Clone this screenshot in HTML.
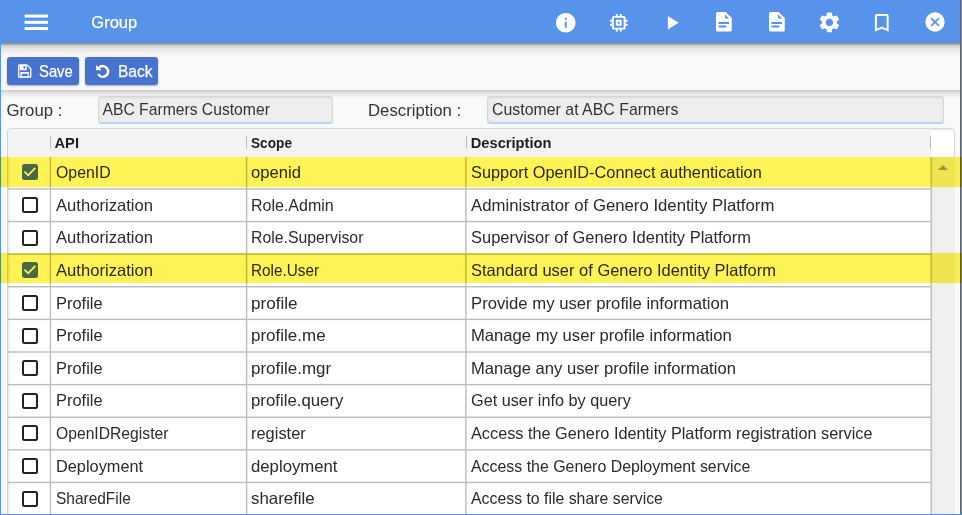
<!DOCTYPE html>
<html><head><meta charset="utf-8"><style>
*{margin:0;padding:0;box-sizing:border-box}
html,body{width:962px;height:515px;overflow:hidden;background:#f9f9f9;font-family:"Liberation Sans",sans-serif}
.a{position:absolute}
.t{position:absolute;white-space:nowrap;line-height:1}
</style></head><body>

<div class="a" style="left:0;top:0;width:962px;height:515px;background:#f9f9f9"></div>
<div class="a" style="left:0;top:0;width:962px;height:43px;background:#5893eb;z-index:5"></div>
<div class="a" style="left:1px;top:43px;width:959px;height:13px;background:linear-gradient(#8e8e88 0px,#a8a8a4 1.5px,#d2d2d2 2.5px,#e6e6e6 6px,#f9f9f9 13px);z-index:5"></div>
<svg class="a" style="left:0;top:0;z-index:6" width="60" height="43" viewBox="0 0 60 43"><rect x="24.6" y="14.55" width="23.3" height="3" fill="#fff"/><rect x="24.6" y="20.8" width="23.3" height="3" fill="#fff"/><rect x="24.6" y="27.0" width="23.3" height="3" fill="#fff"/></svg>
<div class="t" style="left:91.3px;top:13.7px;font-size:16.5px;color:#fff;-webkit-text-stroke:0.25px #fff;z-index:6">Group</div>
<svg class="a" style="left:554.25px;top:10.55px;z-index:6" width="23.50" height="23.50" viewBox="0 0 24 24" fill="#fff"><path d="M12 2C6.48 2 2 6.48 2 12s4.48 10 10 10 10-4.48 10-10S17.52 2 12 2zm1 15h-2v-6h2v6zm0-8h-2V7h2v2z"/></svg>
<svg class="a" style="left:607.25px;top:10.55px;z-index:6" width="23.50" height="23.50" viewBox="0 0 24 24" fill="#fff"><path d="M15 9H9v6h6V9zm-2 4h-2v-2h2v2zm8-2V9h-2V7c0-1.1-.9-2-2-2h-2V3h-2v2h-2V3H9v2H7c-1.1 0-2 .9-2 2v2H3v2h2v2H3v2h2v2c0 1.1.9 2 2 2h2v2h2v-2h2v2h2v-2h2c1.1 0 2-.9 2-2v-2h2v-2h-2v-2h2zm-4 6H7V7h10v10z"/></svg>
<svg class="a" style="left:660.25px;top:10.55px;z-index:6" width="23.50" height="23.50" viewBox="0 0 24 24" fill="#fff"><path d="M8 5v14l11-7z"/></svg>
<svg class="a" style="left:817.15px;top:9.85px;z-index:6" width="24.79" height="24.79" viewBox="0 0 24 24" fill="#fff"><path d="M19.14 12.94c.04-.3.06-.61.06-.94 0-.32-.02-.64-.07-.94l2.03-1.58c.18-.14.23-.41.12-.61l-1.92-3.32c-.12-.22-.37-.29-.59-.22l-2.39.96c-.5-.38-1.030-.7-1.62-.94l-.36-2.54c-.04-.24-.24-.41-.48-.41h-3.84c-.24 0-.43.17-.47.41l-.36 2.54c-.59.24-1.13.57-1.62.94l-2.39-.96c-.22-.08-.47 0-.59.22L2.74 8.87c-.12.21-.08.47.12.61l2.030 1.58c-.05.3-.09.63-.09.94s.02.64.07.94l-2.030 1.58c-.18.14-.23.41-.12.61l1.92 3.32c.12.22.37.29.59.22l2.39-.96c.5.38 1.030.7 1.62.94l.36 2.54c.05.24.24.41.48.41h3.84c.24 0 .44-.17.47-.41l.36-2.54c.59-.24 1.13-.56 1.62-.94l2.39.96c.22.08.47 0 .59-.22l1.92-3.32c.12-.22.07-.47-.12-.61l-2.01-1.58zM12 15.6c-1.98 0-3.6-1.62-3.6-3.6s1.62-3.6 3.6-3.6 3.6 1.62 3.6 3.6-1.62 3.6-3.6 3.6z"/></svg>
<svg class="a" style="left:870.25px;top:10.55px;z-index:6" width="23.50" height="23.50" viewBox="0 0 24 24" fill="#fff"><path d="M17 3H7c-1.1 0-1.99.9-1.99 2L5 21l7-3 7 3V5c0-1.1-.9-2-2-2zm0 15l-5-2.18L7 18V5h10v13z"/></svg>
<svg class="a" style="left:716.25px;top:12.3px;z-index:6" width="16" height="20" viewBox="0 0 16 20"><path fill="#fff" fill-rule="evenodd" d="M1.5 0H9.6L15.75 6.1V18.1Q15.75 19.6 14.25 19.6H1.5Q0 19.6 0 18.1V1.5Q0 0 1.5 0ZM9 2.4V6.6H13.1ZM2.45 10H13.05V11.9H2.45ZM2.45 13.5H10.35V15.4H2.45Z"/></svg>
<svg class="a" style="left:768.95px;top:12.3px;z-index:6" width="16" height="20" viewBox="0 0 16 20"><path fill="#fff" fill-rule="evenodd" d="M1.5 0H9.6L15.75 6.1V18.1Q15.75 19.6 14.25 19.6H1.5Q0 19.6 0 18.1V1.5Q0 0 1.5 0ZM9 2.4V6.6H13.1ZM2.45 10H13.05V11.9H2.45ZM2.45 13.5H10.35V15.4H2.45Z"/></svg>
<svg class="a" style="left:924.6px;top:12.1px;z-index:6" width="20" height="20" viewBox="0 0 20 20"><circle cx="10" cy="10" r="9.7" fill="#fff"/><path d="M6.1 6.1L13.9 13.9M13.9 6.1L6.1 13.9" stroke="#5893eb" stroke-width="1.7"/></svg>
<div class="a" style="left:1px;top:43px;width:959px;height:47px;background:#f9f9f9;z-index:2"></div>
<div class="a" style="left:1px;top:89.7px;width:959px;height:8px;background:linear-gradient(#c9c9c9 0px,#dedede 2px,#f9f9f9 8px);z-index:2"></div>
<div class="a" style="left:7px;top:57.2px;width:72px;height:28.2px;background:#4673d0;border-radius:3px;box-shadow:0 1px 2px rgba(0,0,0,.3);z-index:3"></div>
<div class="a" style="left:85px;top:57.2px;width:72.8px;height:28.2px;background:#4673d0;border-radius:3px;box-shadow:0 1px 2px rgba(0,0,0,.3);z-index:3"></div>
<svg class="a" style="left:18px;top:64px;z-index:4" width="14" height="14" viewBox="0 0 14 14"><path d="M0.75 1.05H9L12.75 4.8V13.05H0.75Z" fill="none" stroke="#fff" stroke-width="1.3" stroke-linejoin="round"/><path fill="#fff" fill-rule="evenodd" d="M1.8 0.4H8.8V6.2H1.8ZM5.5 2.2H7.4V4.6H5.5Z"/><path fill="#fff" fill-rule="evenodd" d="M2.4 8.1H10.8V13.5H2.4ZM3.8 9.8H9.6V12.5H3.8Z"/></svg>
<div class="t" style="left:39.1px;top:62.95px;font-size:16.3px;color:#fff;-webkit-text-stroke:0.25px #fff;z-index:4;transform:scaleX(0.91);transform-origin:0 0">Save</div>
<svg class="a" style="left:94px;top:62px;z-index:4" width="18" height="18" viewBox="0 0 18 18"><path d="M5.6 5.2A5.3 5.3 0 1 1 4.8 13" fill="none" stroke="#fff" stroke-width="2.6" stroke-linecap="round"/><path d="M2.1 3.1L2.1 8.2L7.6 8.2Z" fill="#fff"/></svg>
<div class="t" style="left:118px;top:62.95px;font-size:16.3px;color:#fff;-webkit-text-stroke:0.25px #fff;z-index:4;transform:scaleX(0.952);transform-origin:0 0">Back</div>
<div class="t" style="left:6.5px;top:102.8px;font-size:16.75px;color:#333">Group :</div>
<div class="a" style="left:98.3px;top:96px;width:234.3px;height:27.7px;background:#ededed;border:1px solid #d6d6d6;border-bottom:2px solid #b7d5fa;border-radius:3px;box-shadow:inset 0 1px 2px rgba(0,0,0,.08);z-index:3"></div>
<div class="t" style="left:102.5px;top:101.6px;font-size:15.7px;color:#333;z-index:4">ABC Farmers Customer</div>
<div class="t" style="left:368px;top:102.8px;font-size:16.75px;color:#333">Description :</div>
<div class="a" style="left:487.3px;top:96px;width:456.3px;height:27.7px;background:#ededed;border:1px solid #d6d6d6;border-bottom:2px solid #b7d5fa;border-radius:3px;box-shadow:inset 0 1px 2px rgba(0,0,0,.08);z-index:3"></div>
<div class="t" style="left:491.5px;top:101.6px;font-size:15.7px;color:#333;z-index:4;transform:scaleX(1.013);transform-origin:0 0">Customer at ABC Farmers</div>
<div class="a" style="left:7px;top:128px;width:948px;height:400px;background:#fff;border:1px solid #d6d6d6;border-radius:4px;box-shadow:inset 1px 1px 2px rgba(0,0,0,.12)"></div>
<div class="a" style="left:8px;top:129px;width:923px;height:28px;background:#f3f3f3;border-radius:3px 0 0 0"></div>
<div class="a" style="left:50px;top:136px;width:1.3px;height:13px;background:#bdbdbd"></div>
<div class="a" style="left:246px;top:136px;width:1.3px;height:13px;background:#bdbdbd"></div>
<div class="a" style="left:466px;top:136px;width:1.3px;height:13px;background:#bdbdbd"></div>
<div class="a" style="left:930px;top:136px;width:1.3px;height:13px;background:#bdbdbd"></div>
<div class="t" style="left:54.5px;top:135.7px;font-size:14.7px;font-weight:bold;color:#1e1e1e">API</div>
<div class="t" style="left:250.8px;top:135.7px;font-size:14.7px;font-weight:bold;color:#1e1e1e;transform:scaleX(0.93);transform-origin:0 0">Scope</div>
<div class="t" style="left:470.7px;top:135.7px;font-size:14.7px;font-weight:bold;color:#1e1e1e">Description</div>
<div class="a" style="left:932px;top:157px;width:22.7px;height:360px;background:#efefef"></div>
<div class="a" style="left:938.4px;top:165.3px;width:0;height:0;border-left:5px solid transparent;border-right:5px solid transparent;border-bottom:5.5px solid #a0a0a0"></div>
<svg class="a" style="left:0;top:0" width="962" height="515" viewBox="0 0 962 515"><rect x="8" y="188.20" width="923.5" height="1.4" fill="#bcbcbc"/><rect x="8" y="220.82" width="923.5" height="1.4" fill="#bcbcbc"/><rect x="8" y="253.44" width="923.5" height="1.4" fill="#bcbcbc"/><rect x="8" y="286.06" width="923.5" height="1.4" fill="#bcbcbc"/><rect x="8" y="318.68" width="923.5" height="1.4" fill="#bcbcbc"/><rect x="8" y="351.30" width="923.5" height="1.4" fill="#bcbcbc"/><rect x="8" y="383.92" width="923.5" height="1.4" fill="#bcbcbc"/><rect x="8" y="416.54" width="923.5" height="1.4" fill="#bcbcbc"/><rect x="8" y="449.16" width="923.5" height="1.4" fill="#bcbcbc"/><rect x="8" y="481.78" width="923.5" height="1.4" fill="#bcbcbc"/><rect x="8" y="514.40" width="923.5" height="1.4" fill="#bcbcbc"/><rect x="49.70" y="157" width="1.4" height="360" fill="#bcbcbc"/><rect x="245.90" y="157" width="1.4" height="360" fill="#bcbcbc"/><rect x="465.20" y="157" width="1.4" height="360" fill="#bcbcbc"/><rect x="930.50" y="157" width="1.4" height="360" fill="#bcbcbc"/></svg>
<div class="a" style="left:22px;top:164.40px;width:16px;height:16px;background:#4a6ed0;border-radius:2.5px"></div>
<svg class="a" style="left:22px;top:164.40px" width="16" height="16" viewBox="0 0 16 16"><path d="M2.4 7.7L6.2 11.3L13.3 3.9" fill="none" stroke="#fff" stroke-width="1.8"/></svg>
<div class="t" style="left:55.8px;top:164.10px;font-size:16.5px;color:#2a2a2a;transform:scaleX(0.9605);transform-origin:0 0">OpenID</div>
<div class="t" style="left:251.3px;top:164.10px;font-size:16.5px;color:#2a2a2a;transform:scaleX(1.0066);transform-origin:0 0">openid</div>
<div class="t" style="left:471.4px;top:164.10px;font-size:16.5px;color:#2a2a2a;transform:scaleX(0.9906);transform-origin:0 0">Support OpenID-Connect authentication</div>
<div class="a" style="left:22px;top:197.02px;width:16px;height:16px;border:2px solid #222;border-radius:2.5px;background:#fff"></div>
<div class="t" style="left:55.8px;top:196.72px;font-size:16.5px;color:#2a2a2a;transform:scaleX(1.0069);transform-origin:0 0">Authorization</div>
<div class="t" style="left:251.3px;top:196.72px;font-size:16.5px;color:#2a2a2a;transform:scaleX(0.9693);transform-origin:0 0">Role.Admin</div>
<div class="t" style="left:471.4px;top:196.72px;font-size:16.5px;color:#2a2a2a;transform:scaleX(1.0147);transform-origin:0 0">Administrator of Genero Identity Platform</div>
<div class="a" style="left:22px;top:229.64px;width:16px;height:16px;border:2px solid #222;border-radius:2.5px;background:#fff"></div>
<div class="t" style="left:55.8px;top:229.34px;font-size:16.5px;color:#2a2a2a;transform:scaleX(1.0069);transform-origin:0 0">Authorization</div>
<div class="t" style="left:251.3px;top:229.34px;font-size:16.5px;color:#2a2a2a;transform:scaleX(0.9577);transform-origin:0 0">Role.Supervisor</div>
<div class="t" style="left:471.4px;top:229.34px;font-size:16.5px;color:#2a2a2a;transform:scaleX(0.9976);transform-origin:0 0">Supervisor of Genero Identity Platform</div>
<div class="a" style="left:22px;top:262.26px;width:16px;height:16px;background:#4a6ed0;border-radius:2.5px"></div>
<svg class="a" style="left:22px;top:262.26px" width="16" height="16" viewBox="0 0 16 16"><path d="M2.4 7.7L6.2 11.3L13.3 3.9" fill="none" stroke="#fff" stroke-width="1.8"/></svg>
<div class="t" style="left:55.8px;top:261.96px;font-size:16.5px;color:#2a2a2a;transform:scaleX(1.0069);transform-origin:0 0">Authorization</div>
<div class="t" style="left:251.3px;top:261.96px;font-size:16.5px;color:#2a2a2a;transform:scaleX(0.9274);transform-origin:0 0">Role.User</div>
<div class="t" style="left:471.4px;top:261.96px;font-size:16.5px;color:#2a2a2a;transform:scaleX(0.9985);transform-origin:0 0">Standard user of Genero Identity Platform</div>
<div class="a" style="left:22px;top:294.88px;width:16px;height:16px;border:2px solid #222;border-radius:2.5px;background:#fff"></div>
<div class="t" style="left:55.8px;top:294.58px;font-size:16.5px;color:#2a2a2a;transform:scaleX(0.9959);transform-origin:0 0">Profile</div>
<div class="t" style="left:251.3px;top:294.58px;font-size:16.5px;color:#2a2a2a;transform:scaleX(1.0366);transform-origin:0 0">profile</div>
<div class="t" style="left:471.4px;top:294.58px;font-size:16.5px;color:#2a2a2a;transform:scaleX(1.0119);transform-origin:0 0">Provide my user profile information</div>
<div class="a" style="left:22px;top:327.50px;width:16px;height:16px;border:2px solid #222;border-radius:2.5px;background:#fff"></div>
<div class="t" style="left:55.8px;top:327.20px;font-size:16.5px;color:#2a2a2a;transform:scaleX(0.9959);transform-origin:0 0">Profile</div>
<div class="t" style="left:251.3px;top:327.20px;font-size:16.5px;color:#2a2a2a;transform:scaleX(1.0295);transform-origin:0 0">profile.me</div>
<div class="t" style="left:471.4px;top:327.20px;font-size:16.5px;color:#2a2a2a;transform:scaleX(1.0084);transform-origin:0 0">Manage my user profile information</div>
<div class="a" style="left:22px;top:360.12px;width:16px;height:16px;border:2px solid #222;border-radius:2.5px;background:#fff"></div>
<div class="t" style="left:55.8px;top:359.82px;font-size:16.5px;color:#2a2a2a;transform:scaleX(0.9959);transform-origin:0 0">Profile</div>
<div class="t" style="left:251.3px;top:359.82px;font-size:16.5px;color:#2a2a2a;transform:scaleX(1.0287);transform-origin:0 0">profile.mgr</div>
<div class="t" style="left:471.4px;top:359.82px;font-size:16.5px;color:#2a2a2a;transform:scaleX(1.0063);transform-origin:0 0">Manage any user profile information</div>
<div class="a" style="left:22px;top:392.74px;width:16px;height:16px;border:2px solid #222;border-radius:2.5px;background:#fff"></div>
<div class="t" style="left:55.8px;top:392.44px;font-size:16.5px;color:#2a2a2a;transform:scaleX(0.9959);transform-origin:0 0">Profile</div>
<div class="t" style="left:251.3px;top:392.44px;font-size:16.5px;color:#2a2a2a;transform:scaleX(1.018);transform-origin:0 0">profile.query</div>
<div class="t" style="left:471.4px;top:392.44px;font-size:16.5px;color:#2a2a2a;transform:scaleX(0.9848);transform-origin:0 0">Get user info by query</div>
<div class="a" style="left:22px;top:425.36px;width:16px;height:16px;border:2px solid #222;border-radius:2.5px;background:#fff"></div>
<div class="t" style="left:55.8px;top:425.06px;font-size:16.5px;color:#2a2a2a;transform:scaleX(0.9503);transform-origin:0 0">OpenIDRegister</div>
<div class="t" style="left:251.3px;top:425.06px;font-size:16.5px;color:#2a2a2a;transform:scaleX(0.996);transform-origin:0 0">register</div>
<div class="t" style="left:471.4px;top:425.06px;font-size:16.5px;color:#2a2a2a;transform:scaleX(0.9862);transform-origin:0 0">Access the Genero Identity Platform registration service</div>
<div class="a" style="left:22px;top:457.98px;width:16px;height:16px;border:2px solid #222;border-radius:2.5px;background:#fff"></div>
<div class="t" style="left:55.8px;top:457.68px;font-size:16.5px;color:#2a2a2a;transform:scaleX(0.9892);transform-origin:0 0">Deployment</div>
<div class="t" style="left:251.3px;top:457.68px;font-size:16.5px;color:#2a2a2a;transform:scaleX(1.0138);transform-origin:0 0">deployment</div>
<div class="t" style="left:471.4px;top:457.68px;font-size:16.5px;color:#2a2a2a;transform:scaleX(0.9637);transform-origin:0 0">Access the Genero Deployment service</div>
<div class="a" style="left:22px;top:490.60px;width:16px;height:16px;border:2px solid #222;border-radius:2.5px;background:#fff"></div>
<div class="t" style="left:55.8px;top:490.30px;font-size:16.5px;color:#2a2a2a;transform:scaleX(0.937);transform-origin:0 0">SharedFile</div>
<div class="t" style="left:251.3px;top:490.30px;font-size:16.5px;color:#2a2a2a;transform:scaleX(1.0211);transform-origin:0 0">sharefile</div>
<div class="t" style="left:471.4px;top:490.30px;font-size:16.5px;color:#2a2a2a;transform:scaleX(0.9598);transform-origin:0 0">Access to file share service</div>
<div class="a" style="left:0;top:157px;width:962px;height:30.2px;background:#fff355;mix-blend-mode:multiply;z-index:10"></div>
<div class="a" style="left:0;top:253.3px;width:962px;height:29.7px;background:#fff355;mix-blend-mode:multiply;z-index:10"></div>
<div class="a" style="left:0;top:0;width:1px;height:515px;background:#5b94ea;z-index:9"></div>
<div class="a" style="left:960px;top:0;width:1px;height:515px;background:#666;z-index:9"></div>
<div class="a" style="left:961px;top:0;width:1px;height:515px;background:#5b94ea;z-index:9"></div>
<div class="a" style="left:0;top:513.5px;width:962px;height:1.5px;background:#5b94ea;z-index:9"></div>
</body></html>
